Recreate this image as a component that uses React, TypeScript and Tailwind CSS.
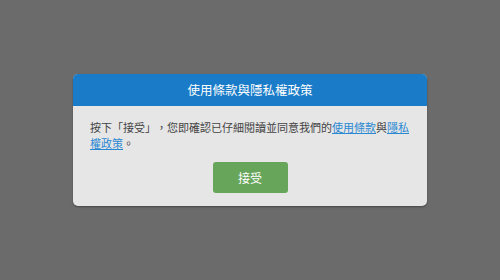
export default function App() {
  return (
    <div
      className="w-[500px] h-[280px] bg-[#6b6b6b] flex items-center justify-center [text-spacing-trim:space-all]"
      style={{ fontFamily: '"Noto Sans CJK TC", "Noto Sans", sans-serif' }}
    >
      <div className="w-[354px] rounded-[5px] bg-[#e6e6e6] overflow-hidden shadow-[0_1px_2px_rgba(0,0,0,0.35)]">
        {/* Header */}
        <div className="h-[32px] bg-[#1a7cc8] flex items-center justify-center">
          <span className="text-[12.5px] leading-none text-white">使用條款與隱私權政策</span>
        </div>

        {/* Body */}
        <div className="px-[17px] pt-[13px] pb-[13px]">
          <p className="text-[11px] leading-[16px] text-[#444444]">
            按下「接受」，您即確認已仔細閱讀並同意我們的
            <a href="#" className="text-[#2a88d2] underline">使用條款</a>
            與
            <a href="#" className="text-[#2a88d2] underline">隱私權政策</a>
            。
          </p>
          <div className="mt-[11px] flex justify-center">
            <button className="w-[75px] h-[31px] rounded-[3px] bg-[#67a55a] text-white text-[12px] leading-none">
              接受
            </button>
          </div>
        </div>
      </div>
    </div>
  );
}
